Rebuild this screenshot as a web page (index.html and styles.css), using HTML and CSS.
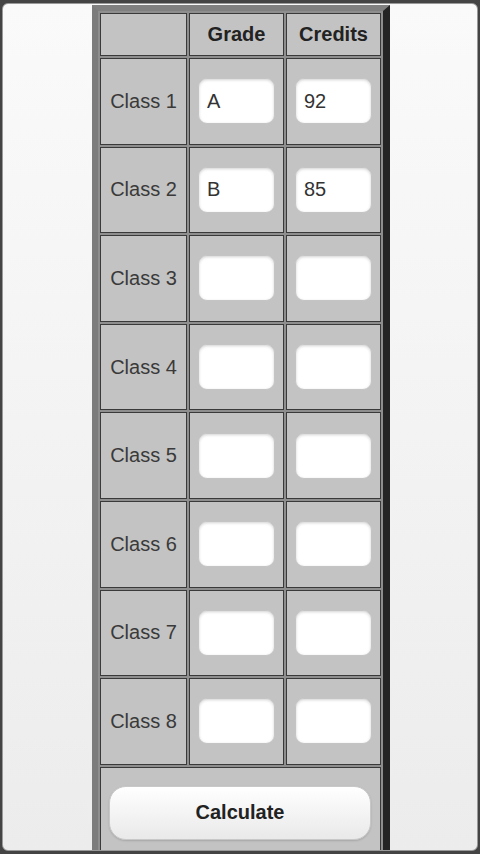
FILE: index.html
```html
<!DOCTYPE html>
<html>
<head>
<meta charset="utf-8">
<link rel="stylesheet" href="styles.css">
</head>
<body>
<div class="frame">
  <table class="grid">
    <tr class="head">
      <th class="c1"></th>
      <th class="c2">Grade</th>
      <th class="c3">Credits</th>
    </tr>
    <tr class="row"><td class="label">Class 1</td><td><input class="field" value="A"></td><td><input class="field" value="92"></td></tr>
    <tr class="row"><td class="label">Class 2</td><td><input class="field" value="B"></td><td><input class="field" value="85"></td></tr>
    <tr class="row"><td class="label">Class 3</td><td><input class="field"></td><td><input class="field"></td></tr>
    <tr class="row"><td class="label">Class 4</td><td><input class="field"></td><td><input class="field"></td></tr>
    <tr class="row"><td class="label">Class 5</td><td><input class="field"></td><td><input class="field"></td></tr>
    <tr class="row"><td class="label">Class 6</td><td><input class="field"></td><td><input class="field"></td></tr>
    <tr class="row"><td class="label">Class 7</td><td><input class="field"></td><td><input class="field"></td></tr>
    <tr class="row"><td class="label">Class 8</td><td><input class="field"></td><td><input class="field"></td></tr>
    <tr class="action"><td colspan="3"><button class="calc">Calculate</button></td></tr>
  </table>
</div>
</body>
</html>
```

FILE: styles.css
```css
html, body {
  margin: 0;
  padding: 0;
  height: 100%;
}
body {
  background: #444;
  font-family: "Liberation Sans", Arial, sans-serif;
  overflow: hidden;
}
.frame {
  box-sizing: border-box;
  margin: 3px 2px 0 2px;
  padding-left: 2px;
  height: 848px;
  border: 1px solid #9a9a9a;
  border-radius: 6px;
  background: linear-gradient(#fafafa, #ececec);
  overflow: hidden;
}
.grid {
  border-collapse: separate;
  border-spacing: 2px;
  background: #8e8e8e;
  border-style: solid;
  border-width: 6px 7px 6px 6px;
  border-color: #808080 #242424 #242424 #7c7c7c;
  margin: 1px auto 0 auto;
  table-layout: fixed;
}
.grid th, .grid td {
  padding: 0;
  background: #c3c3c3;
  border: 1px solid #3a3a3a;
  text-align: center;
  vertical-align: middle;
}
.c1 { width: 85px; }
.c2, .c3 { width: 93px; }
.head { height: 43px; }
.head th {
  font-size: 20px;
  font-weight: bold;
  color: #222;
}
.row { height: 86.6px; }
.label {
  font-size: 20px;
  color: #3a3a3a;
}
.field {
  display: block;
  box-sizing: border-box;
  margin: 0 auto;
  width: 77px;
  height: 46px;
  padding: 0 8px;
  border: 1px solid #c4c4c4;
  border-radius: 9px;
  background: #fff;
  box-shadow: inset 0 1px 3px rgba(0,0,0,0.18);
  font-family: "Liberation Sans", Arial, sans-serif;
  font-size: 20px;
  color: #333;
  outline: none;
}
.action { height: 110px; }
.action td {
  vertical-align: top;
  padding: 18px 9px 0 8px;
}
.calc {
  display: block;
  box-sizing: border-box;
  width: 100%;
  height: 54px;
  border: 1px solid #c8c8c8;
  border-radius: 17px;
  background: linear-gradient(#ffffff, #e9e9e9);
  box-shadow: 0 1px 2px rgba(0,0,0,0.15);
  font-family: "Liberation Sans", Arial, sans-serif;
  font-size: 20px;
  font-weight: bold;
  color: #222;
}
```
